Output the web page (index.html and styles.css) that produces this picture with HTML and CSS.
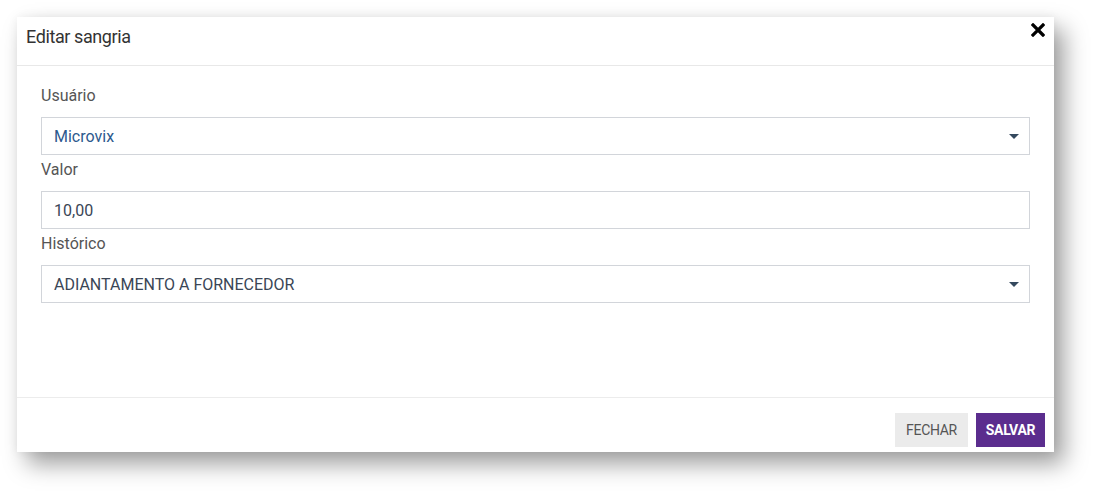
FILE: index.html
```html
<!DOCTYPE html>
<html lang="pt-BR">
<head>
    <meta charset="UTF-8">
    <title>Editar sangria</title>
    <link rel="stylesheet" href="styles.css">
</head>
<body>

<div class="modal">
    <div class="modal-header">
        <h4 class="modal-title">Editar sangria</h4>
        <button class="close" type="button" aria-label="Fechar">
            <svg width="14" height="14" viewBox="0 0 14 14">
                <path d="M2 2 L12 12 M12 2 L2 12" stroke="#000" stroke-width="3.2" stroke-linecap="square"/>
            </svg>
        </button>
    </div>

    <div class="modal-body">
        <div class="form-group">
            <label>Usuário</label>
            <div class="select">
                <span class="value user">Microvix</span>
                <span class="caret"></span>
            </div>
        </div>
        <div class="form-group">
            <label>Valor</label>
            <div class="input">
                <span class="value">10,00</span>
            </div>
        </div>
        <div class="form-group">
            <label>Histórico</label>
            <div class="select">
                <span class="value">ADIANTAMENTO A FORNECEDOR</span>
                <span class="caret"></span>
            </div>
        </div>
    </div>

    <div class="modal-footer">
        <button class="btn btn-default" type="button">FECHAR</button>
        <button class="btn btn-primary" type="button">SALVAR</button>
    </div>
</div>

</body>
</html>
```

FILE: styles.css
```css
html, body {
    height: 100%;
}
body {
    margin: 0;
    min-height: 500px;
    background: #fff;
    font-family: Roboto, "Liberation Sans", sans-serif;
    overflow: hidden;
}
.modal {
    width: 1037px;
    height: 435px;
    margin: 17px 0 0 17px;
    background: #fff;
    display: flex;
    flex-direction: column;
    box-shadow: 10px 12px 22px rgba(0, 0, 0, 0.38), 0 0 10px rgba(0, 0, 0, 0.06);
}
.modal-header {
    height: 49px;
    box-sizing: border-box;
    padding: 8px 9px 0 9px;
    border-bottom: 1px solid #e8e8e8;
    display: flex;
    justify-content: space-between;
    align-items: flex-start;
}
.modal-title {
    margin: 0;
    font-size: 18px;
    font-weight: normal;
    line-height: 24px;
    color: #333;
    letter-spacing: -0.4px;
}
.close {
    background: none;
    border: none;
    padding: 0;
    margin-top: -2px;
    width: 14px;
    height: 14px;
    display: block;
    cursor: pointer;
}
.modal-body {
    flex: 1;
    padding: 15px 24px 0 24px;
}
.form-group label {
    display: block;
    font-size: 16px;
    line-height: 22px;
    color: #555;
    padding-top: 4px;
    margin-bottom: 10px;
}
.select, .input {
    height: 38px;
    box-sizing: border-box;
    border: 1px solid #d2d5da;
    display: flex;
    align-items: center;
    justify-content: space-between;
    padding: 0 10px 0 12px;
}
.value {
    font-size: 16px;
    color: #3a4656;
}
.value.user {
    color: #2d5a8e;
}
.caret {
    width: 0;
    height: 0;
    border-left: 5px solid transparent;
    border-right: 5px solid transparent;
    border-top: 5px solid #34495e;
}
.modal-footer {
    height: 55px;
    box-sizing: border-box;
    border-top: 1px solid #ececec;
    padding: 15px 9px 0 0;
    display: flex;
    justify-content: flex-end;
    align-items: flex-start;
    gap: 8px;
}
.btn {
    height: 34px;
    border: none;
    font-family: Roboto, "Liberation Sans", sans-serif;
    font-size: 14px;
    letter-spacing: -0.3px;
    padding: 0;
    cursor: pointer;
}
.btn-default {
    width: 73px;
    background: #ebebeb;
    color: #555;
}
.btn-primary {
    width: 69px;
    background: #5b2d8e;
    color: #fff;
    font-weight: bold;
}
```
